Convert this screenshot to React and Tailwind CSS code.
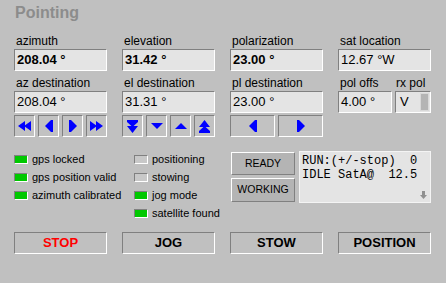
import React from "react";

const sunken = "border border-t-[#808080] border-l-[#808080] border-b-white border-r-white";

function Arrow({ dir }) {
  // small blue glyphs used on the jog buttons
  const shapes = {
    ll: { w: 13, h: 10, d: "M0 5 L7 0 L7 10 Z M6 5 L13 0 L13 10 Z" },
    l: { w: 8, h: 12, d: "M0 6 L6 0 L8 0 L8 12 L6 12 Z" },
    r: { w: 8, h: 12, d: "M8 6 L2 0 L0 0 L0 12 L2 12 Z" },
    rr: { w: 13, h: 10, d: "M13 5 L6 0 L6 10 Z M7 5 L0 0 L0 10 Z" },
    dd: { w: 11, h: 13, d: "M0 0 L11 0 L11 2 L5.5 7 L0 2 Z M0 6 L11 6 L5.5 13 Z" },
    d: { w: 12, h: 6, d: "M0 0 L12 0 L6 6 Z" },
    u: { w: 12, h: 6, d: "M0 6 L12 6 L6 0 Z" },
    uu: { w: 11, h: 13, d: "M0 13 L11 13 L11 11 L5.5 6 L0 11 Z M0 7 L11 7 L5.5 0 Z" },
  };
  const s = shapes[dir];
  return (
    <svg width={s.w} height={s.h} viewBox={`0 0 ${s.w} ${s.h}`}>
      <path d={s.d} fill="#0000ff" />
    </svg>
  );
}

function JogButton({ dir, wide }) {
  return (
    <div
      className={`${sunken} ${wide ? "w-[45px]" : "w-[21px]"} h-[22px] bg-[#c2c2c2] flex items-center justify-center`}
    >
      <Arrow dir={dir} />
    </div>
  );
}

function Field({ label, value, bold }) {
  return (
    <div>
      <div className="h-[15px] leading-[15px] text-[12px] text-black pl-[2px]">{label}</div>
      <div
        className={`${sunken} h-[22px] bg-[#e4e4e4] flex items-center pl-[2px] text-[13px] text-black ${bold ? "font-bold" : ""}`}
      >
        {value}
      </div>
    </div>
  );
}

function Led({ on, label }) {
  return (
    <div className="h-[18px] flex items-center">
      <div
        className={`w-[14px] h-[9px] border border-t-[#808080] border-l-[#808080] border-b-white border-r-white ${on ? "bg-[#00c800]" : "bg-[#c8c8c8]"}`}
      />
      <span className="ml-[4px] text-[11px] text-black">{label}</span>
    </div>
  );
}

function BigButton({ label, red }) {
  return (
    <div
      className={`${sunken} h-[22px] bg-[#c0c0c0] flex items-center justify-center text-[13px] font-bold ${red ? "text-[#ff0000]" : "text-black"}`}
    >
      {label}
    </div>
  );
}

export default function App() {
  return (
    <div className="w-[446px] h-[283px] bg-[#c0c0c0] overflow-hidden font-['Liberation_Sans',Arial,sans-serif]">
      {/* title */}
      <div className="pt-[4px] pl-[15px] h-[22px] text-[16px] leading-[18px] font-bold text-[#8c8c8c]">
        Pointing
      </div>

      {/* current position */}
      <div className="mt-[12px] pl-[14px] grid grid-cols-[93px_93px_93px_93px] gap-x-[15px]">
        <Field label="azimuth" value="208.04 °" bold />
        <Field label="elevation" value="31.42 °" bold />
        <Field label="polarization" value="23.00 °" bold />
        <Field label="sat location" value="12.67 °W" />
      </div>

      {/* destinations */}
      <div className="mt-[5px] pl-[14px] grid grid-cols-[93px_93px_93px_93px] gap-x-[15px]">
        <div>
          <Field label="az destination" value="208.04 °" />
          <div className="mt-[2px] flex gap-[3px]">
            <JogButton dir="ll" />
            <JogButton dir="l" />
            <JogButton dir="r" />
            <JogButton dir="rr" />
          </div>
        </div>
        <div>
          <Field label="el destination" value="31.31 °" />
          <div className="mt-[2px] flex gap-[3px]">
            <JogButton dir="dd" />
            <JogButton dir="d" />
            <JogButton dir="u" />
            <JogButton dir="uu" />
          </div>
        </div>
        <div>
          <Field label="pl destination" value="23.00 °" />
          <div className="mt-[2px] flex gap-[3px]">
            <JogButton dir="l" wide />
            <JogButton dir="r" wide />
          </div>
        </div>
        <div className="flex gap-[3px]">
          <div className="w-[54px]">
            <Field label="pol offs" value="4.00 °" />
          </div>
          <div className="w-[36px]">
            <div className="h-[15px] leading-[15px] text-[12px] text-black pl-[1px]">rx pol</div>
            <div className={`${sunken} h-[22px] bg-[#e4e4e4] flex items-center pl-[4px] text-[13px] text-black`}>
              <span className="flex-1">V</span>
              <div className="w-[9px] h-[18px] mr-[1px] bg-[#b4b4b4] border border-[#d8d8d8]" />
            </div>
          </div>
        </div>
      </div>

      {/* status */}
      <div className="mt-[13px] pl-[14px] flex">
        <div className="w-[120px]">
          <Led on label="gps locked" />
          <Led on label="gps position valid" />
          <Led on label="azimuth calibrated" />
        </div>
        <div className="w-[97px]">
          <Led label="positioning" />
          <Led label="stowing" />
          <Led on label="jog mode" />
          <Led on label="satellite found" />
        </div>
        <div className="w-[64px] mt-[2px] flex flex-col gap-[3px]">
          <div className="h-[23px] bg-[#b4b4b4] border border-t-white border-l-white border-b-[#808080] border-r-[#808080] flex items-center justify-center text-[10.5px] text-black">
            READY
          </div>
          <div className="h-[24px] bg-[#b4b4b4] border border-t-white border-l-white border-b-[#808080] border-r-[#808080] flex items-center justify-center text-[10.5px] text-black">
            WORKING
          </div>
        </div>
        <div className="ml-[4px] mt-[1px] w-[132px] h-[52px] bg-[#e4e4e4] border border-[#f4f4f4] relative pl-[2px] pt-[2px] font-['Liberation_Mono','Courier_New',monospace] text-[12px] leading-[14px] text-black whitespace-pre">
          <div>RUN:(+/-stop)  0</div>
          <div>IDLE SatA@  12.5</div>
          <svg className="absolute right-[3px] bottom-[3px]" width="7" height="8" viewBox="0 0 7 8">
            <path d="M2 0 L5 0 L5 4 L7 4 L3.5 8 L0 4 L2 4 Z" fill="#909090" />
          </svg>
        </div>
      </div>

      {/* commands */}
      <div className="mt-[10px] pl-[14px] grid grid-cols-[93px_93px_93px_93px] gap-x-[15px]">
        <BigButton label="STOP" red />
        <BigButton label="JOG" />
        <BigButton label="STOW" />
        <BigButton label="POSITION" />
      </div>
    </div>
  );
}
